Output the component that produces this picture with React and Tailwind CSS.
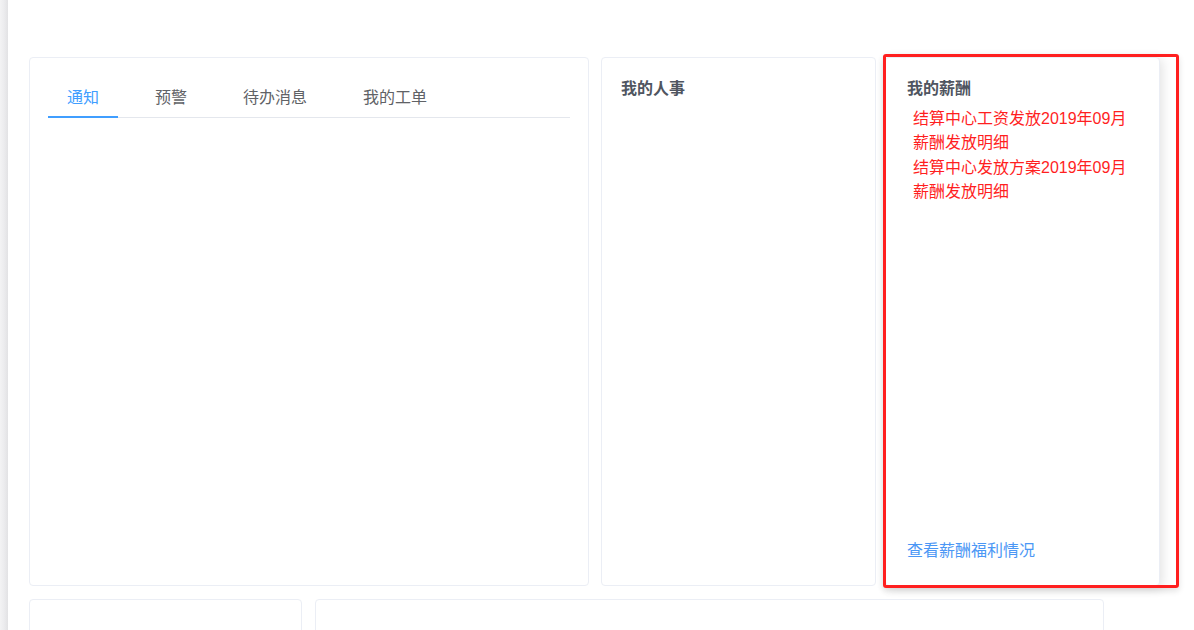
import { useState } from "react";

const tabs = ["通知", "预警", "待办消息", "我的工单"];

const salaryItems = [
  "结算中心工资发放2019年09月薪酬发放明细",
  "结算中心发放方案2019年09月薪酬发放明细",
];

const App = () => {
  const [active, setActive] = useState(0);

  return (
    <div
      className="flex h-[630px] w-full overflow-hidden bg-white"
      style={{ fontFamily: '"Liberation Sans", "Noto Sans CJK SC", sans-serif' }}
    >
      {/* sidebar edge */}
      <div className="w-[8px] shrink-0 bg-gradient-to-r from-[#f3f3f4] via-[#ececee] to-[#e2e2e4]" />

      <div className="flex-1 pl-[21px] pt-[57px]">
        {/* top row */}
        <div className="flex h-[529px]">
          {/* tabs card */}
          <div className="w-[560px] shrink-0 rounded-[4px] border border-[#ebeef5] bg-white px-[18px] pt-[20px]">
            <div className="flex h-[40px] gap-[18px] border-b border-[#e4e7ed]">
              {tabs.map((tab, i) => (
                <button
                  key={tab}
                  onClick={() => setActive(i)}
                  className={`relative px-[19px] text-[16px] leading-[40px] ${
                    active === i ? "text-[#409eff]" : "text-[#606266]"
                  }`}
                >
                  {tab}
                  {active === i && (
                    <span className="absolute bottom-[-1px] left-0 h-[2px] w-full bg-[#409eff]" />
                  )}
                </button>
              ))}
            </div>
          </div>

          {/* my hr */}
          <div className="ml-[12px] w-[275px] shrink-0 rounded-[4px] border border-[#ebeef5] bg-white px-[19px] pt-[20px]">
            <div className="text-[16px] font-bold leading-[22px] text-[#4f5560]">我的人事</div>
          </div>

          {/* my salary */}
          <div className="relative ml-[9px] w-[275px] shrink-0">
            <div className="flex h-full flex-col rounded-[4px] border border-[#ebeef5] bg-white px-[21px] pt-[20px] shadow-[2px_2px_12px_0_rgba(0,0,0,0.12)]">
              <div className="text-[16px] font-bold leading-[22px] text-[#4f5560]">我的薪酬</div>
              <div className="mt-[7px] w-[226px] pl-[6px]">
                {salaryItems.map((item, i) => (
                  <div
                    key={i}
                    className={`text-[16px] leading-[24px] text-[#ff1f1f] ${i > 0 ? "mt-[1px]" : ""}`}
                  >
                    {item}
                  </div>
                ))}
              </div>
              <div className="mt-auto pb-[23px] text-[16px] leading-[22px] text-[#4b97f5]">
                查看薪酬福利情况
              </div>
            </div>
            {/* highlight frame */}
            <div className="pointer-events-none absolute -left-[2px] -top-[3px] -bottom-[2px] -right-[19px] rounded-[3px] border-[3px] border-[#ff1f1f] shadow-[0_3px_6px_rgba(0,0,0,0.12)]" />
          </div>
        </div>

        {/* bottom row */}
        <div className="mt-[13px] flex h-[200px]">
          <div className="w-[273px] shrink-0 rounded-[4px] border border-[#ebeef5] bg-white" />
          <div className="ml-[13px] w-[789px] shrink-0 rounded-[4px] border border-[#ebeef5] bg-white" />
        </div>
      </div>
    </div>
  );
};

export default App;
